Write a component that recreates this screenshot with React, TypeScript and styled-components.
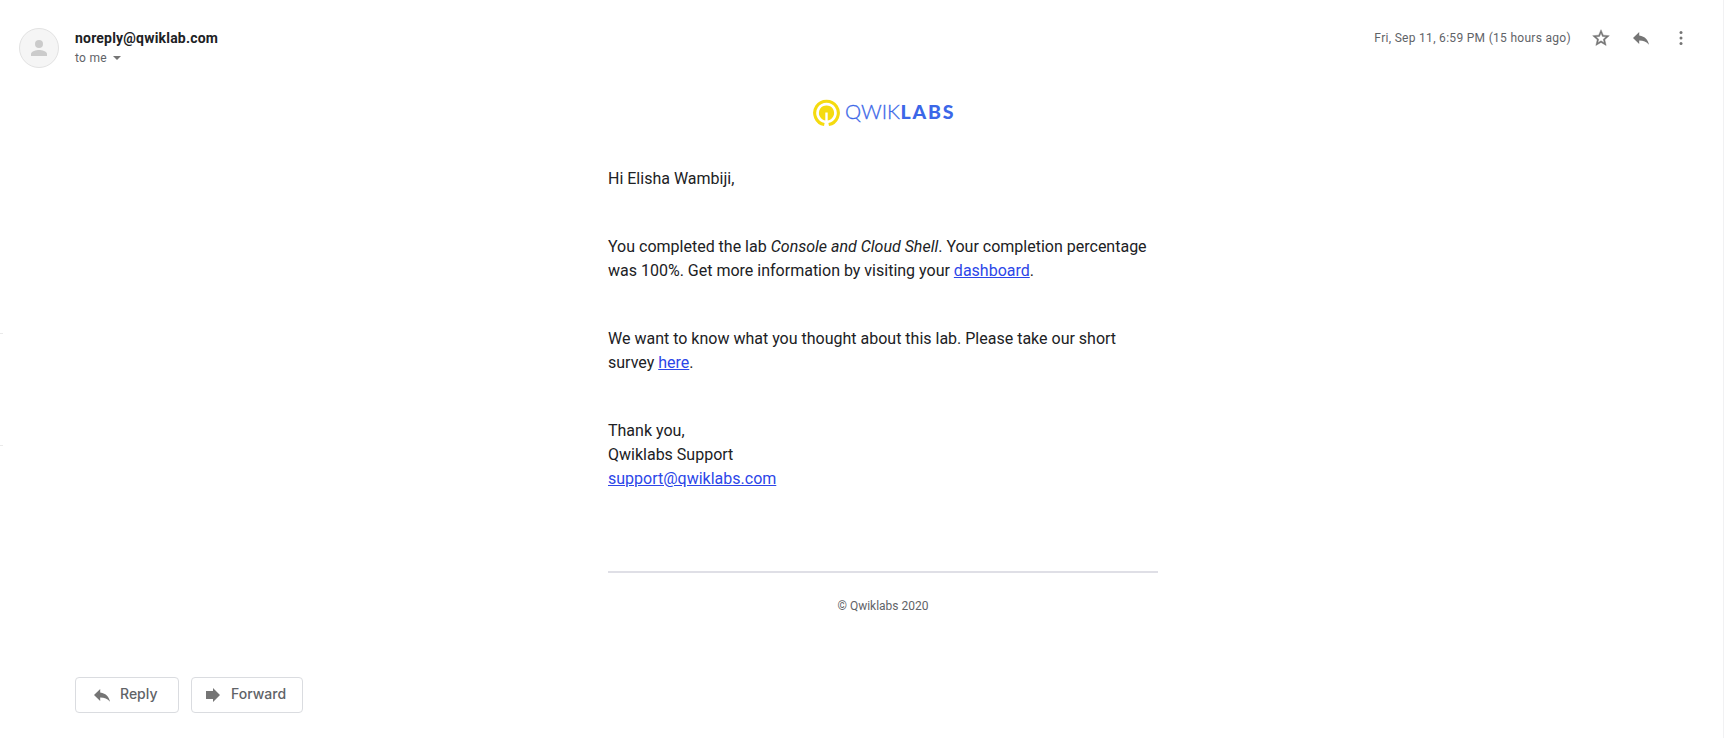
import React from 'react';
import styled, { createGlobalStyle } from 'styled-components';

const GlobalStyle = createGlobalStyle`
  *, *::before, *::after { box-sizing: border-box; }
  body { margin: 0; background: #fff; font-family: Roboto, "Liberation Sans", sans-serif; color: #202124; }
`;

const Page = styled.main`
  position: relative;
  height: 738px;
  display: flex;
  flex-direction: column;
  overflow: hidden;
  background: #fff;
  border-right: 1px solid #f1f1f3;
`;

const EdgeTick = styled.span<{ $top: number }>`
  position: absolute;
  left: 0;
  top: ${(p) => p.$top}px;
  width: 3px;
  height: 1px;
  background: #eaeaea;
`;

const Header = styled.header`
  display: flex;
  align-items: flex-start;
  height: 98px;
  padding: 28px 32px 0 19px;
`;

const Avatar = styled.div`
  width: 40px;
  height: 40px;
  border-radius: 50%;
  border: 1px solid #e2e2e2;
  background: #f5f5f5;
  display: flex;
  align-items: center;
  justify-content: center;
  svg { display: block; }
`;

const Sender = styled.div`
  margin-left: 16px;
  flex: 1;
`;

const SenderName = styled.div`
  font-size: 14px;
  font-weight: 700;
  line-height: 20px;
  letter-spacing: 0.2px;
`;

const Recipient = styled.div`
  display: flex;
  align-items: center;
  font-size: 12px;
  line-height: 20px;
  letter-spacing: 0.3px;
  color: #5f6368;
`;

const Caret = styled.span`
  margin-left: 6px;
  border: 4px solid transparent;
  border-top-color: #757575;
  border-bottom: 0;
`;

const Meta = styled.div`
  display: flex;
  align-items: center;
  height: 20px;
  gap: 20px;
  svg { display: block; }
`;

const DateText = styled.span`
  font-size: 12px;
  line-height: 20px;
  letter-spacing: 0.3px;
  color: #5f6368;
`;

const Message = styled.article`
  width: 550px;
  margin-left: 608px;
  flex: 1;
`;

const LogoRow = styled.div`
  display: flex;
  height: 69px;
  padding-left: 204px;
  svg { display: block; flex: none; }
`;

const Paragraph = styled.p`
  margin: 0 0 44px;
  font-size: 16px;
  line-height: 24px;
`;

const Link = styled.a`
  color: #2c46e8;
  text-decoration: underline;
`;

const Footer = styled.footer`
  margin-top: 80px;
  padding-top: 23px;
  border-top: 2px solid #dfdfe6;
  text-align: center;
  font-size: 12px;
  line-height: 20px;
  color: #5f6368;
`;

const Actions = styled.nav`
  display: flex;
  gap: 12px;
  padding: 0 0 25px 75px;
`;

const ActionButton = styled.button<{ $width: number; $pad: number }>`
  display: flex;
  align-items: center;
  gap: 8px;
  width: ${(p) => p.$width}px;
  height: 36px;
  padding: 0 0 0 ${(p) => p.$pad}px;
  border: 1px solid #dadce0;
  border-radius: 4px;
  background: #fff;
  color: #5f6368;
  font: 500 14px/20px Inter, sans-serif;
  svg { display: block; flex: none; }
`;

const ActionLabel = styled.span`
  padding-bottom: 2px;
`;

const ReplyIcon = () => (
  <svg width="20" height="20" viewBox="0 0 20 20" fill="#757575">
    <path d="M8.2 7.5V4L2 10l6.2 6v-3.6c4.3 0 7.3 1.2 9.8 4.3-.9-4.3-3.7-8.5-9.8-9.2z" />
  </svg>
);

const ForwardIcon = () => (
  <svg width="20" height="20" viewBox="0 0 20 20" fill="#757575">
    <path d="M3 6h7V3l7 7-7 7v-3H3z" />
  </svg>
);

const StarIcon = () => (
  <svg width="20" height="20" viewBox="0 0 24 24" fill="#757575" stroke="#757575" strokeWidth="0.5">
    <path d="M22 9.24l-7.19-.62L12 2 9.19 8.63 2 9.24l5.46 4.73L5.82 21 12 17.27 18.18 21l-1.63-7.03L22 9.24zM12 15.4l-3.76 2.27 1-4.28-3.32-2.88 4.38-.38L12 6.1l1.71 4.04 4.38.38-3.32 2.88 1 4.28L12 15.4z" />
  </svg>
);

const MoreIcon = () => (
  <svg width="20" height="20" viewBox="0 0 20 20" fill="#757575">
    <circle cx="10" cy="4.6" r="1.5" />
    <circle cx="10" cy="10" r="1.5" />
    <circle cx="10" cy="15.4" r="1.5" />
  </svg>
);

const PersonIcon = () => (
  <svg width="24" height="24" viewBox="0 0 24 24" fill="#cbcbcb">
    <circle cx="12" cy="8" r="4" />
    <path d="M4 20v-2c0-2.7 5.3-4 8-4s8 1.3 8 4v2z" />
  </svg>
);

const Logo = () => (
  <svg width="144" height="30" viewBox="0 0 144 30">
    <path d="M12.3 26.6A11.8 11.8 0 1 1 16.7 26.6" fill="none" stroke="#f5db0f" strokeWidth="3.1" />
    <path d="M13.3 22.5A7.6 7.6 0 1 1 15.7 22.5V14.5H13.3z" fill="#f5db0f" />
    <g fill="#3b67e8" fontFamily="Lato, sans-serif">
      <text x="33" y="21.3" fontSize="20" fontWeight="300" stroke="#3b67e8" strokeWidth="0.3" textLength="55" lengthAdjust="spacingAndGlyphs">QWIK</text>
      <text x="88.5" y="21.3" fontSize="19.5" fontWeight="900" textLength="53" lengthAdjust="spacing">LABS</text>
    </g>
  </svg>
);

export default function App() {
  return (
    <>
      <GlobalStyle />
      <Page>
        <EdgeTick $top={333} />
        <EdgeTick $top={445} />
        <Header>
          <Avatar><PersonIcon /></Avatar>
          <Sender>
            <SenderName>noreply@qwiklab.com</SenderName>
            <Recipient>to me<Caret /></Recipient>
          </Sender>
          <Meta>
            <DateText>Fri, Sep 11, 6:59 PM (15 hours ago)</DateText>
            <StarIcon />
            <ReplyIcon />
            <MoreIcon />
          </Meta>
        </Header>
        <Message>
          <LogoRow><Logo /></LogoRow>
          <Paragraph>Hi Elisha Wambiji,</Paragraph>
          <Paragraph>
            You completed the lab <em>Console and Cloud Shell</em>. Your completion percentage was 100%. Get more
            information by visiting your <Link>dashboard</Link>.
          </Paragraph>
          <Paragraph>
            We want to know what you thought about this lab. Please take our short survey <Link>here</Link>.
          </Paragraph>
          <Paragraph>
            Thank you,<br />
            Qwiklabs Support<br />
            <Link>support@qwiklabs.com</Link>
          </Paragraph>
          <Footer>© Qwiklabs 2020</Footer>
        </Message>
        <Actions>
          <ActionButton $width={104} $pad={16}><ReplyIcon /><ActionLabel>Reply</ActionLabel></ActionButton>
          <ActionButton $width={112} $pad={11}><ForwardIcon /><ActionLabel>Forward</ActionLabel></ActionButton>
        </Actions>
      </Page>
    </>
  );
}
